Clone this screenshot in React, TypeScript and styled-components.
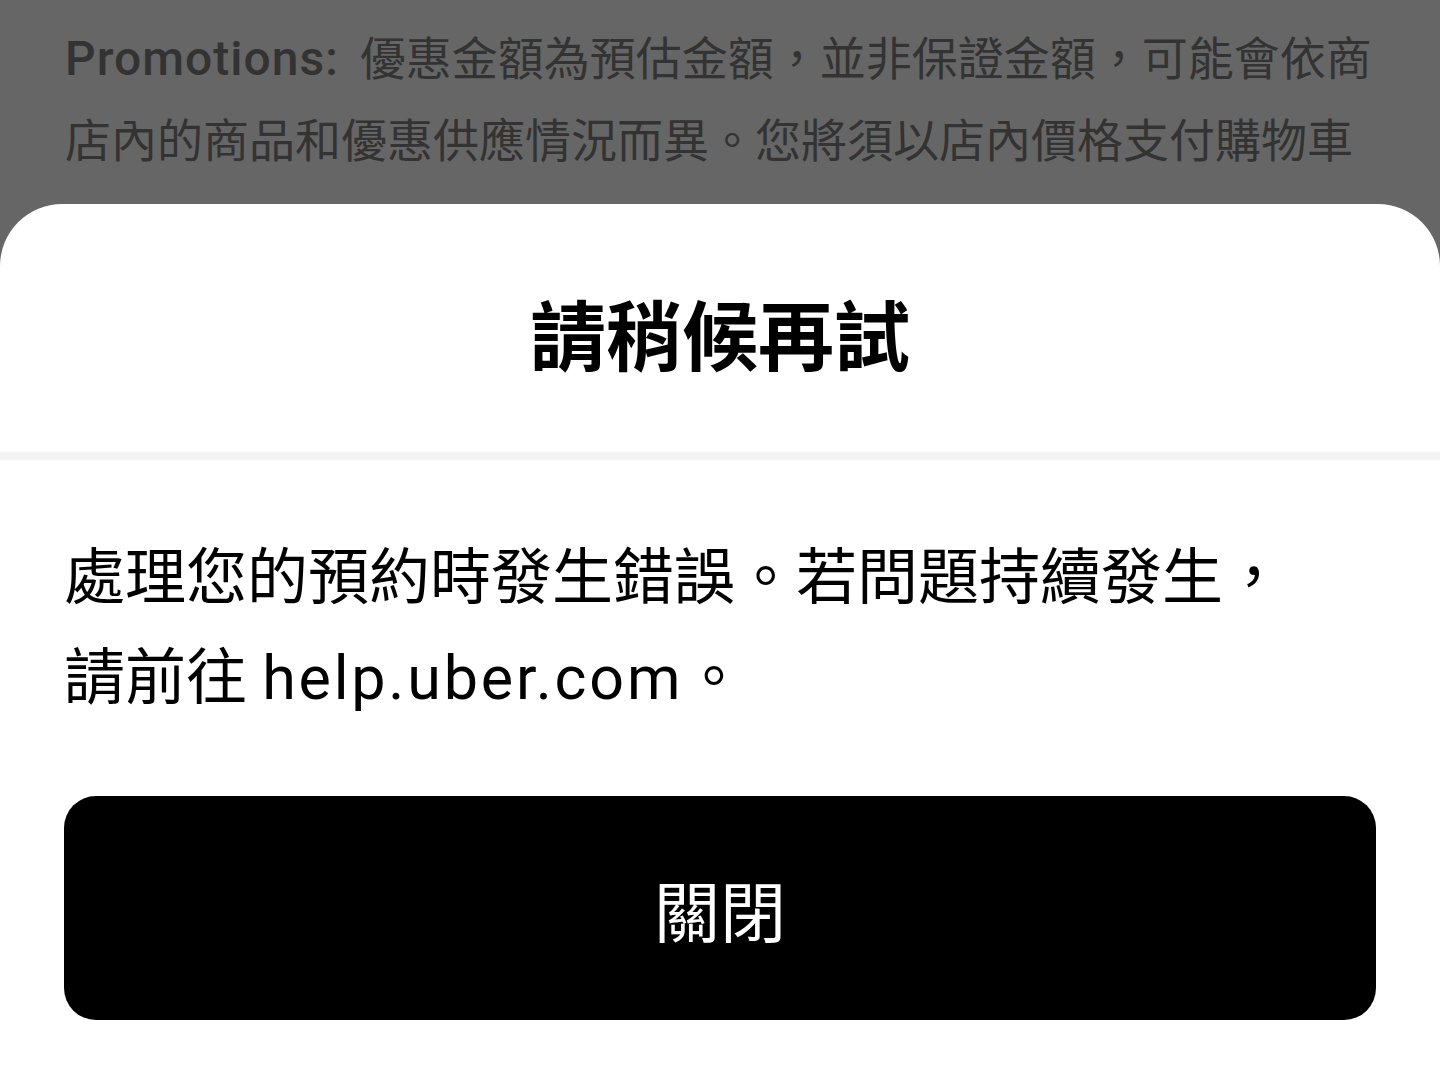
import React from "react";
import styled, { createGlobalStyle } from "styled-components";

const GlobalStyle = createGlobalStyle`
  html, body {
    margin: 0;
    padding: 0;
    background: #666666;
  }
  body {
    font-family: Roboto, "Noto Sans CJK TC", sans-serif;
  }
`;

const Page = styled.div`
  width: 1440px;
  height: 1084px;
  background: #666666;
  display: flex;
  flex-direction: column;
  overflow: hidden;
`;

const Backdrop = styled.div`
  height: 204px;
  flex: none;
  overflow: hidden;
  box-sizing: border-box;
  padding: 18px 40px 0 65px;
`;

const BackdropText = styled.p`
  margin: 0;
  font-family: Roboto, "Noto Sans CJK TC", sans-serif;
  font-size: 46px;
  line-height: 82px;
  color: #333333;
`;

const Line = styled.span`
  display: block;
  white-space: nowrap;
`;

const Label = styled.span`
  font-size: 48px;
  font-weight: 500;
  letter-spacing: 1px;
  margin-right: 21px;
`;

const Latin = styled.span`
  letter-spacing: 2.8px;
`;

const Sheet = styled.section`
  flex: 1;
  background: #ffffff;
  border-radius: 62px 62px 0 0;
  display: flex;
  flex-direction: column;
`;

const Header = styled.header`
  padding: 90px 64px 82px;
  display: flex;
  justify-content: center;
`;

const Title = styled.h1`
  margin: 0;
  font-family: "Noto Sans CJK TC", sans-serif;
  font-weight: 700;
  font-size: 76px;
  line-height: 76px;
  color: #000000;
`;

const Divider = styled.div`
  height: 8px;
  background: #f3f3f3;
`;

const Body = styled.div`
  padding: 68px 64px 64px;
  display: flex;
  flex-direction: column;
  gap: 68px;
`;

const Message = styled.p`
  margin: 0;
  font-family: Roboto, "Noto Sans CJK TC", sans-serif;
  font-size: 61px;
  line-height: 100px;
  color: #000000;
`;

const CloseButton = styled.button`
  height: 224px;
  width: 100%;
  border: none;
  border-radius: 32px;
  background: #000000;
  color: #ffffff;
  font-family: "Noto Sans CJK TC", sans-serif;
  font-size: 66px;
  font-weight: 400;
  cursor: pointer;
  display: flex;
  align-items: center;
  justify-content: center;
`;

export default function App() {
  return (
    <>
      <GlobalStyle />
      <Page>
        <Backdrop>
          <BackdropText>
            <Line>
              <Label>Promotions:</Label>優惠金額為預估金額，並非保證金額，可能會依商
            </Line>
            <Line>店內的商品和優惠供應情況而異。您將須以店內價格支付購物車</Line>
          </BackdropText>
        </Backdrop>
        <Sheet>
          <Header>
            <Title>請稍候再試</Title>
          </Header>
          <Divider />
          <Body>
            <Message>
              <Line>處理您的預約時發生錯誤。若問題持續發生，</Line>
              <Line>
                請前往 <Latin>help.uber.com</Latin>。
              </Line>
            </Message>
            <CloseButton>關閉</CloseButton>
          </Body>
        </Sheet>
      </Page>
    </>
  );
}
